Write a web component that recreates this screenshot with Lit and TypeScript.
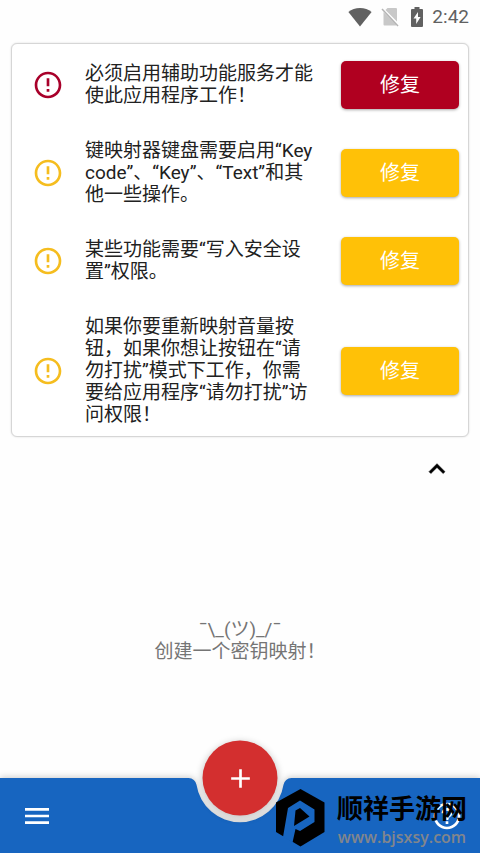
import { LitElement, html, css } from "lit";
import { customElement, property } from "lit/decorators.js";

const FONT = css`Roboto, "Noto Sans CJK SC", sans-serif`;

@customElement("status-bar")
class StatusBar extends LitElement {
  static styles = css`
    :host {
      display: flex;
      justify-content: flex-end;
      align-items: center;
      height: 33px;
      padding-right: 11px;
      color: #616161;
      font: 19px/24px ${FONT};
    }
    svg { display: block; }
    .wifi { margin-right: 9px; }
    .sim { margin-right: 12px; }
    .battery { margin-right: 9px; }
  `;
  render() {
    return html`
      <svg class="wifi" width="24" height="20" viewBox="0 0 24 20" aria-label="Wi-Fi">
        <path fill="#616161" d="M12 19.500L.4 5C3.600 2.500 7.500 1 12 1s8.400 1.500 11.600 4z" />
      </svg>
      <svg class="sim" width="18" height="20" viewBox="0 0 18 20" aria-label="No SIM">
        <path fill="#c8c8c8" d="M6.500 1h8.500q1 0 1 1v12.500L4.500 3zM2.500 5L15 17.500V18.500H3.500q-1 0-1-1z" />
        <path stroke="#b4b4b4" stroke-width="1.500" d="M1 2l16 17" />
      </svg>
      <svg class="battery" width="12" height="20" viewBox="0 0 12 20" aria-label="Charging">
        <path fill="#616161" fill-rule="evenodd" d="M3.500 0h5v2H11q1 0 1 1v16q0 1-1 1H1q-1 0-1-1V3q0-1 1-1h2.500zM7 5l-4.500 6.500h2.700V17L9.600 10H7z" />
      </svg>
      <span>2:42</span>
    `;
  }
}

@customElement("fix-row")
class FixRow extends LitElement {
  @property() tone = "warn";
  @property() text = "";
  static styles = css`
    :host {
      display: grid;
      grid-template-columns: 32px 1fr 118px;
      column-gap: 21px;
      align-items: center;
      min-height: 66px;
      font: 19px/22px ${FONT};
      color: #212121;
    }
    .icon { display: block; fill: #f5bd1f; }
    .icon.error { fill: #a8002a; }
    p { margin: 0; padding-right: 4px; }
    button {
      height: 48px;
      border: 0;
      border-radius: 5px;
      padding: 0;
      background: #ffc107;
      color: #fff;
      font: 20px/24px ${FONT};
      box-shadow: 0 1px 3px rgba(0, 0, 0, 0.35);
    }
    button.error { background: #b00020; }
  `;
  render() {
    return html`
      <svg class="icon ${this.tone}" width="32" height="32" viewBox="0 0 24 24" aria-hidden="true">
        <path d="M11 15h2v2h-2zm0-8h2v6h-2zm.99-5C6.470 2 2 6.480 2 12s4.470 10 9.990 10C17.520 22 22 17.520 22 12S17.520 2 11.990 2zM12 20c-4.420 0-8-3.580-8-8s3.580-8 8-8 8 3.580 8 8-3.580 8-8 8z" />
      </svg>
      <p id="message">${this.text}</p>
      <button class=${this.tone} aria-describedby="message">修复</button>
    `;
  }
}

@customElement("bottom-bar")
class BottomBar extends LitElement {
  static styles = css`
    :host { display: block; position: relative; height: 75px; }
    .surface { display: flex; height: 100%; filter: drop-shadow(0 -1px 3px rgba(0, 0, 0, 0.2)); }
    .side { flex: 1; background: #1765c0; }
    .surface svg { display: block; width: 120px; fill: #1765c0; margin: 0 -1px; }
    .actions {
      position: absolute;
      inset: 0;
      display: flex;
      justify-content: space-between;
      align-items: center;
      padding: 0 17px 0 21px;
    }
    button { border: 0; padding: 0; background: none; color: #fff; display: grid; place-items: center; }
    button svg { display: block; fill: #fff; }
    .fab {
      position: absolute;
      left: 50%;
      top: 0;
      width: 75px;
      height: 75px;
      transform: translate(-50%, -50%);
      border-radius: 50%;
      background: #d32f2f;
      box-shadow: 0 2px 7px 1px rgba(0, 0, 0, 0.22);
    }
    .brand {
      position: absolute;
      right: 13px;
      bottom: 5px;
      display: flex;
      align-items: center;
      gap: 12px;
    }
    .brand svg { display: block; }
    .words { display: flex; flex-direction: column; align-items: center; }
    .name { font: 700 26px/38px "Noto Sans CJK SC", sans-serif; color: #000; }
    .site { font: 600 16px/22px "Open Sans", sans-serif; color: #82868c; }
  `;
  render() {
    return html`
      <div class="surface">
        <div class="side"></div>
        <svg height="75" viewBox="0 0 120 75" aria-hidden="true">
          <path d="M0 0H8.600A8 8 0 0 1 16.500 6.800A44 44 0 0 0 103.500 6.800A8 8 0 0 1 111.400 0H120V75H0Z" />
        </svg>
        <div class="side"></div>
      </div>
      <div class="actions">
        <button aria-label="菜单">
          <svg width="32" height="32" viewBox="0 0 24 24"><path d="M3 18h18v-2H3zm0-5h18v-2H3zm0-7v2h18V6z" /></svg>
        </button>
        <button aria-label="帮助">
          <svg width="32" height="32" viewBox="0 0 24 24"><path d="M11 18h2v-2h-2zm1-16C6.480 2 2 6.480 2 12s4.480 10 10 10 10-4.480 10-10S17.520 2 12 2zm0 18c-4.410 0-8-3.590-8-8s3.590-8 8-8 8 3.590 8 8-3.590 8-8 8zm0-14c-2.210 0-4 1.790-4 4h2c0-1.100.9-2 2-2s2 .9 2 2c0 2-3 1.750-3 5h2c0-2.250 3-2.500 3-5 0-2.210-1.790-4-4-4z" /></svg>
        </button>
      </div>
      <button class="fab" aria-label="新建">
        <svg width="32" height="32" viewBox="0 0 24 24"><path d="M19 13h-6v6h-2v-6H5v-2h6V5h2v6h6z" /></svg>
      </button>
      <div class="brand">
        <svg width="49" height="58" viewBox="0 0 49 58" aria-hidden="true">
          <path fill="#000" d="M24.500 0L48.500 13.500V43L24.500 57.500L0 43V13.500Z" />
          <path fill="#1765c0" d="M7 48L12 19L24 11.500L38.500 20.500V33L24 42L19.500 40L16.500 53.500Z" />
          <path fill="#000" d="M19.500 21.500L24 19L33.500 27.500L18 37Z" />
        </svg>
        <div class="words">
          <span class="name">顺祥手游网</span>
          <span class="site">www.bjsxsy.com</span>
        </div>
      </div>
    `;
  }
}

const ISSUES = [
  { tone: "error", text: "必须启用辅助功能服务才能使此应用程序工作！" },
  { tone: "warn", text: "键映射器键盘需要启用“Key code”、“Key”、“Text”和其他一些操作。" },
  { tone: "warn", text: "某些功能需要“写入安全设置”权限。" },
  { tone: "warn", text: "如果你要重新映射音量按钮，如果你想让按钮在“请勿打扰”模式下工作，你需要给应用程序“请勿打扰”访问权限！" },
];

@customElement("app-root")
class AppRoot extends LitElement {
  static styles = css`
    :host {
      display: flex;
      flex-direction: column;
      min-height: 100vh;
      background: #fefefe;
      font: 19px/22px ${FONT};
    }
    .card {
      display: flex;
      flex-direction: column;
      gap: 22px;
      margin: 10px 11px 0;
      padding: 8px 9px 10px 20px;
      border: 1px solid #d6d6d6;
      border-radius: 6px;
      background: #fff;
      box-shadow: 0 0 2px rgba(0, 0, 0, 0.15);
    }
    .collapse {
      align-self: flex-end;
      margin: 16px 27px 0 0;
      border: 0;
      padding: 0;
      background: none;
    }
    .collapse svg { display: block; }
    .empty {
      flex: 1;
      display: flex;
      flex-direction: column;
      justify-content: center;
      align-items: center;
      padding-top: 18px;
      color: #757575;
    }
    .empty p { margin: 0; }
  `;
  render() {
    return html`
      <status-bar></status-bar>
      <section class="card">
        ${ISSUES.map((i) => html`<fix-row lang="zh-CN" .tone=${i.tone} .text=${i.text}></fix-row>`)}
      </section>
      <button class="collapse" aria-label="收起">
        <svg width="32" height="32" viewBox="0 0 24 24"><path d="M12 8l-6 6 1.410 1.410L12 10.830l4.590 4.580L18 14z" stroke="#000" stroke-width=".4" /></svg>
      </button>
      <main class="empty" lang="zh-CN">
        <p>¯\\_(ツ)_/¯</p>
        <p>创建一个密钥映射！</p>
      </main>
      <bottom-bar></bottom-bar>
    `;
  }
}
